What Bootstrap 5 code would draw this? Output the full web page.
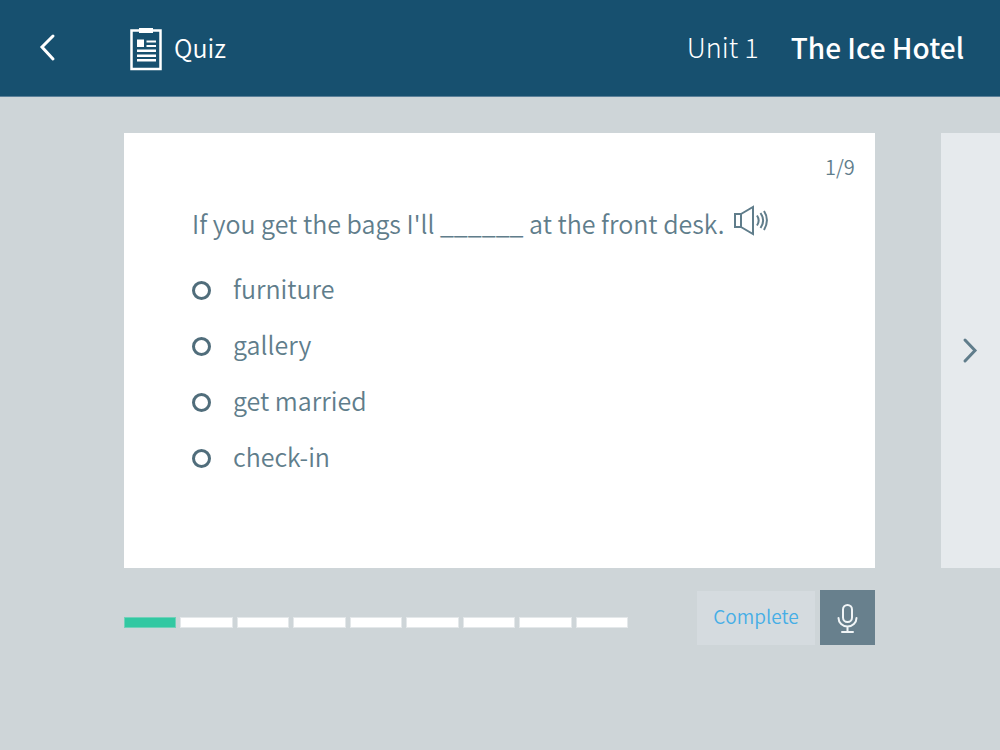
<!DOCTYPE html>
<html lang="en">
<head>
<meta charset="utf-8">
<meta name="viewport" content="width=device-width, initial-scale=1">
<title>Quiz – The Ice Hotel</title>
<link href="https://cdn.jsdelivr.net/npm/bootstrap@5.3.0/dist/css/bootstrap.min.css" rel="stylesheet">
<style>
  body { background: #ced5d8; color: #607d8b; font-family: "Noto Sans CJK SC", "Noto Sans", sans-serif; font-weight: 350; font-size: 25px; line-height: 40px; }
  .topbar { background: #17506f; border-bottom: 1px solid #5b8099; min-height: 97px; padding: 0 36px 2px; color: #fff; }
  .back-link { width: 94px; }
  .unit-label { font-size: 27px; font-weight: 300; }
  .unit-title { font-size: 28px; font-weight: 500; }
  .stage { padding: 36px 0 22px 12.4%; }
  .question-card { width: 85.7%; padding: 18px 20px 84px 68px; background: #fff; }
  .counter { font-size: 20px; line-height: 32px; }
  .question { margin: 20px 0 17px; }
  .option-row { min-height: 56px; gap: 22px; }
  .option-row .form-check-input { width: 19px; height: 19px; margin: 4px 0 0; border: 3px solid #506d7b; }
  .option-row .form-check-input:checked { background-color: #506d7b; }
  .next-card { width: 59px; padding-right: 3px; background: #e6eaed; color: #607d8b; }
  .controls { width: 75.1%; margin-left: 12.4%; gap: 5px; }
  .steps { gap: 4px; margin: 10px 64px 0 0; padding: 0; list-style: none; }
  .steps li { height: 11px; background: #fff; border: 1px solid #e4e8ea; }
  .steps .current { background: #32c8a2; border-color: #70d1b9; }
  .complete-btn { width: 118px; height: 54px; padding: 0 0 3px; background: #d5dbdf; color: #46aee6; font-size: 19px; font-weight: 350; }
  .mic-btn { width: 55px; height: 55px; padding: 0; background: #68808d; }
</style>
</head>
<body>
<header class="topbar d-flex align-items-center">
  <a href="#" class="back-link" aria-label="Back"><svg class="d-block" width="24" height="30" viewBox="0 0 24 30" fill="none" stroke="#fff" stroke-width="3" stroke-linecap="round"><path d="M17 4 6 15l11 12"/></svg></a>
  <svg class="mt-1" width="32" height="44" viewBox="0 0 32 44" aria-hidden="true"><path d="M1.500 3.500h29v38.500h-29z" fill="none" stroke="#fff" stroke-width="2.500"/><path d="M9 1h14v5H9zM7 12.500h7v7.500H7zM16.500 13.500H26v2h-9.500zM16.500 18H26v2h-9.500zM7 22.500h19V25H7zM7 27.500h19V30H7zM7 32h19v2.500H7z" fill="#fff"/></svg>
  <span class="ms-2 ps-1">Quiz</span>
  <span class="unit-label ms-auto">Unit 1</span>
  <span class="unit-title ms-4 ps-2">The Ice Hotel</span>
</header>
<main>
  <div class="stage d-flex">
    <form class="question-card" id="quiz">
      <div class="counter text-end">1/9</div>
      <div class="question d-flex align-items-center">
        <span id="q">If you get the bags I'll ______ at the front desk.</span>
        <button type="button" class="btn p-0 pb-1 border-0 ms-1 lh-1" aria-label="Listen"><svg class="d-block" width="40" height="36" viewBox="0 0 40 36" fill="none" stroke="#607d8b" stroke-width="2"><path d="M6 11h6v13H6zM12 11l12-7v27l-12-7M28 12.500c2 3 2 7 0 10M31.500 10c3.500 5 3.500 10 0 15M35 8c4 6 4 12 0 19"/></svg></button>
      </div>
      <div role="radiogroup" aria-labelledby="q">
        <div class="option-row d-flex align-items-center"><input class="form-check-input" type="radio" name="answer" id="a1"><label for="a1">furniture</label></div>
        <div class="option-row d-flex align-items-center"><input class="form-check-input" type="radio" name="answer" id="a2"><label for="a2">gallery</label></div>
        <div class="option-row d-flex align-items-center"><input class="form-check-input" type="radio" name="answer" id="a3"><label for="a3">get married</label></div>
        <div class="option-row d-flex align-items-center"><input class="form-check-input" type="radio" name="answer" id="a4"><label for="a4">check-in</label></div>
      </div>
    </form>
    <a href="#" class="next-card ms-auto d-flex align-items-center justify-content-center" aria-label="Next question"><svg width="24" height="30" viewBox="0 0 24 30" fill="none" stroke="currentColor" stroke-width="3" stroke-linecap="round"><path d="M8 4l10 10.500L8 25"/></svg></a>
  </div>
  <div class="controls d-flex align-items-center">
    <ol class="steps d-flex flex-fill">
      <li class="flex-fill current"></li><li class="flex-fill"></li><li class="flex-fill"></li><li class="flex-fill"></li><li class="flex-fill"></li><li class="flex-fill"></li><li class="flex-fill"></li><li class="flex-fill"></li><li class="flex-fill"></li>
    </ol>
    <button type="submit" form="quiz" class="btn complete-btn rounded-0 border-0">Complete</button>
    <button type="button" class="btn mic-btn rounded-0 border-0 d-flex align-items-center justify-content-center" aria-label="Record"><svg width="22" height="32" viewBox="0 0 22 32" fill="none" stroke="#f1f5f7" stroke-width="2" stroke-linecap="round"><rect x="6" y="3" width="9" height="17" rx="4.500"/><path d="M1.500 16a9 8.500 0 0 0 18 0M10.500 25v5M5 30h11"/></svg></button>
  </div>
</main>
<script src="https://cdn.jsdelivr.net/npm/bootstrap@5.3.0/dist/js/bootstrap.bundle.min.js"></script>
</body>
</html>
